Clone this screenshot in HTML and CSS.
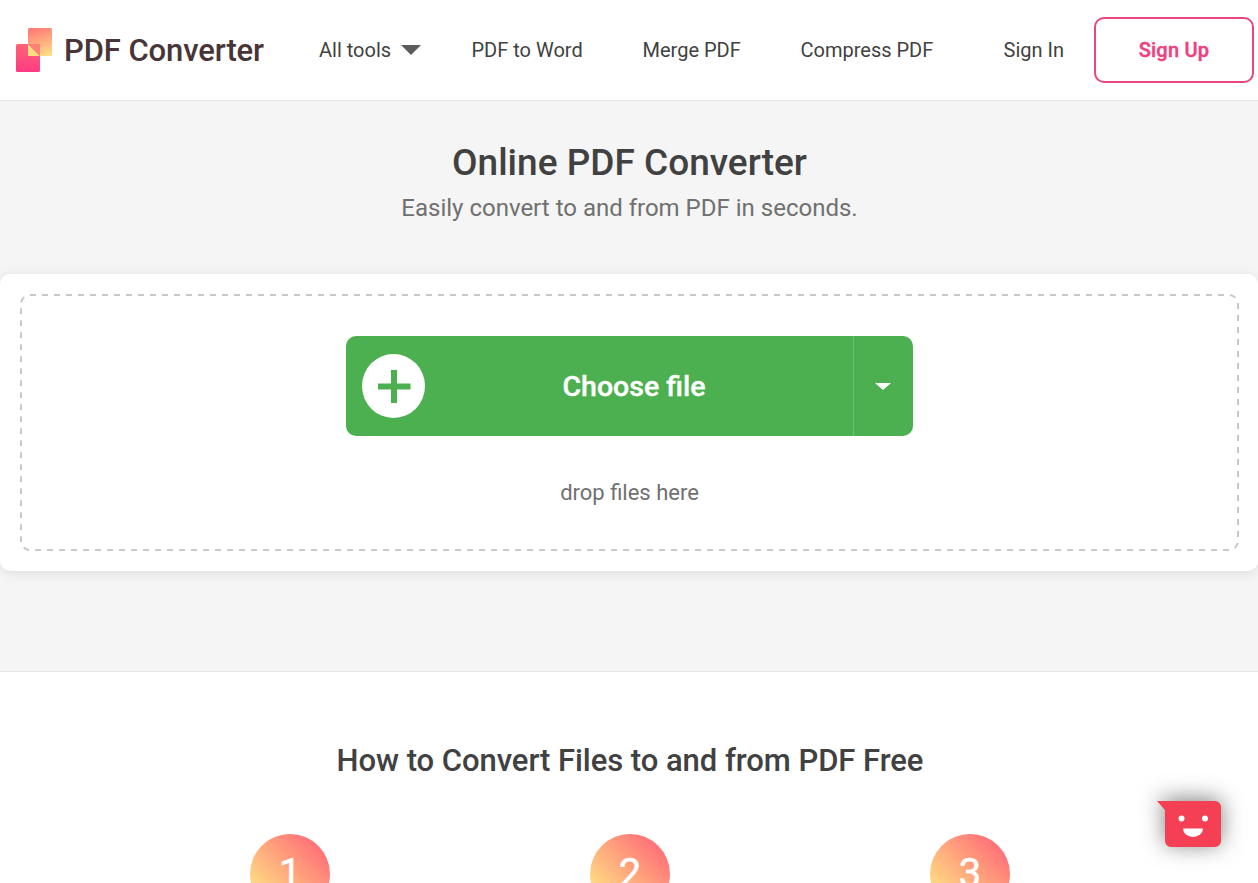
FILE: index.html
```html
<!DOCTYPE html>
<html lang="en">
<head>
<meta charset="utf-8">
<title>PDF Converter</title>
<link rel="stylesheet" href="styles.css">
</head>
<body>
<header class="header">
  <a class="brand">
    <svg class="logo" width="36" height="44" viewBox="0 0 36 44">
      <defs>
        <linearGradient id="topPage" x1=".7" y1="1" x2=".4" y2="0"><stop offset="0" stop-color="#ffdc86"/><stop offset="1" stop-color="#ff7c78"/></linearGradient>
        <linearGradient id="bottomPage" x1=".5" y1="0" x2=".4" y2="1"><stop offset="0" stop-color="#fd6577"/><stop offset="1" stop-color="#fd3a84"/></linearGradient>
      </defs>
      <rect x="12" width="24" height="28" rx="1.5" fill="url(#topPage)"/>
      <rect y="16" width="24" height="28" rx="1.5" fill="url(#bottomPage)"/>
      <path d="M12 16l12 12H12z" fill="#ffdc80"/>
      <path d="M12 16h10.500a1.500 1.500 0 0 1 1.500 1.500V28z" fill="#ff8175"/>
    </svg>
    <span class="brand-name">PDF Converter</span>
  </a>
  <nav class="nav">
    <a class="tools">All tools <svg width="20" height="10" viewBox="0 0 20 10"><path d="M0 0h20L10 10z" fill="#5c5c5c"/></svg></a>
    <a class="word">PDF to Word</a>
    <a class="merge">Merge PDF</a>
    <a class="compress">Compress PDF</a>
  </nav>
  <a class="sign-in">Sign In</a>
  <a class="sign-up">Sign Up</a>
</header>
<main>
  <section class="hero">
    <h1 class="title">Online PDF Converter</h1>
    <p class="subtitle">Easily convert to and from PDF in seconds.</p>
    <div class="card">
      <div class="drop">
        <svg class="dashes" width="1219" height="257"><rect x="1" y="1" width="1217" height="255" rx="9" fill="none" stroke="#c8c8c8" stroke-width="2" stroke-dasharray="6 6"/></svg>
        <div class="choose">
          <svg class="plus" width="63" height="64" viewBox="0 0 63 64"><ellipse cx="31.500" cy="32" rx="31.500" ry="32" fill="#fff"/><path d="M16 32.500h32.500M32 16v33" stroke="#4caf50" stroke-width="6"/></svg>
          <span class="choose-label">Choose file</span>
          <span class="choose-more"><svg width="16" height="7" viewBox="0 0 16 7"><path d="M0 0h16L8 7z" fill="#fff"/></svg></span>
        </div>
        <p class="hint">drop files here</p>
      </div>
    </div>
  </section>
  <section class="how">
    <h2 class="how-title">How to Convert Files to and from PDF Free</h2>
    <div class="steps">
      <span class="step">1</span>
      <span class="step">2</span>
      <span class="step">3</span>
    </div>
  </section>
</main>
<svg class="chat" width="65" height="47" viewBox="0 0 65 47">
  <path d="M0 0H58a6 6 0 0 1 6 6V40a6 6 0 0 1-6 6H14a6 6 0 0 1-6-6V9z" fill="#f43f54"/>
  <circle cx="24.500" cy="17.500" r="3" fill="#fff"/><circle cx="48" cy="17.500" r="3" fill="#fff"/>
  <path d="M26 27.500H46A10 8.500 0 0 1 26 27.500z" fill="#fff"/>
</svg>
</body>
</html>
```
FILE: styles.css
```css
* { box-sizing: border-box; }
body { margin: 0; height: 883px; overflow: hidden; background: #fff; color: #414141; font-family: Roboto, sans-serif; }
h1, h2, p { margin: 0; }
.header { display: flex; align-items: center; height: 101px; padding: 0 4px 1px 16px; border-bottom: 1px solid #e6e6e6; font-size: 20px; white-space: nowrap; }
.brand { display: flex; align-items: center; gap: 12px; width: 303px; }
.brand-name { padding-top: 2px; font-size: 31px; font-weight: 500; letter-spacing: -.1px; color: #483538; }
.nav { display: flex; flex: 1; }
.tools { display: flex; align-items: center; gap: 10px; width: 152.5px; }
.word { width: 171px; }
.merge { width: 158px; }
.sign-in { margin-right: 30px; }
.sign-up { display: flex; align-items: center; justify-content: center; width: 160px; height: 66px; border: 2px solid #e84680; border-radius: 10px; color: #f0407e; font-weight: 500; letter-spacing: .25px; -webkit-text-stroke: .4px #f0407e; }
.hero { height: 571px; padding-top: 38px; background: #f5f5f5; border-bottom: 1px solid #e6e6e6; text-align: center; }
.title { padding-left: 1px; font-size: 37px; font-weight: 500; line-height: 48px; }
.subtitle { margin-top: 5px; padding-left: 1px; font-size: 24px; line-height: 32px; color: #707070; }
.card { height: 297px; margin-top: 50px; padding: 20px 19px 20px 20px; background: #fff; border-radius: 10px; box-shadow: 0 2px 12px rgba(0,0,0,.1); }
.drop { display: flex; flex-direction: column; align-items: center; position: relative; height: 257px; padding-top: 42px; }
.dashes { position: absolute; inset: 0; }
.choose { display: flex; align-items: center; width: 567px; height: 100px; padding-left: 16px; border-radius: 10px; background: #4caf50; color: #fff; }
.choose-label { flex: 1; padding-right: 10px; font-size: 28.5px; font-weight: 500; -webkit-text-stroke: .4px #fff; }
.choose-more { display: flex; align-items: center; justify-content: center; width: 60px; height: 100px; padding-right: 2px; border-left: 1px solid #71c075; }
.hint { margin-top: 42px; font-size: 22px; line-height: 30px; color: #707070; }
.how { padding-top: 68px; text-align: center; }
.how-title { padding-left: 2px; font-size: 31px; font-weight: 500; line-height: 42px; letter-spacing: -.05px; }
.steps { display: flex; justify-content: center; gap: 260px; margin: 52px 0 0 2px; }
.step { width: 80px; height: 80px; border-radius: 50%; background: linear-gradient(45deg, #ffe283 15%, #ff7678 82%); color: #fff; font-size: 40px; line-height: 80px; -webkit-text-stroke: .5px #fff; }
.chat { position: absolute; left: 1157px; top: 801px; overflow: visible; filter: drop-shadow(0 -2px 11px rgba(0,0,0,.5)); }
```
